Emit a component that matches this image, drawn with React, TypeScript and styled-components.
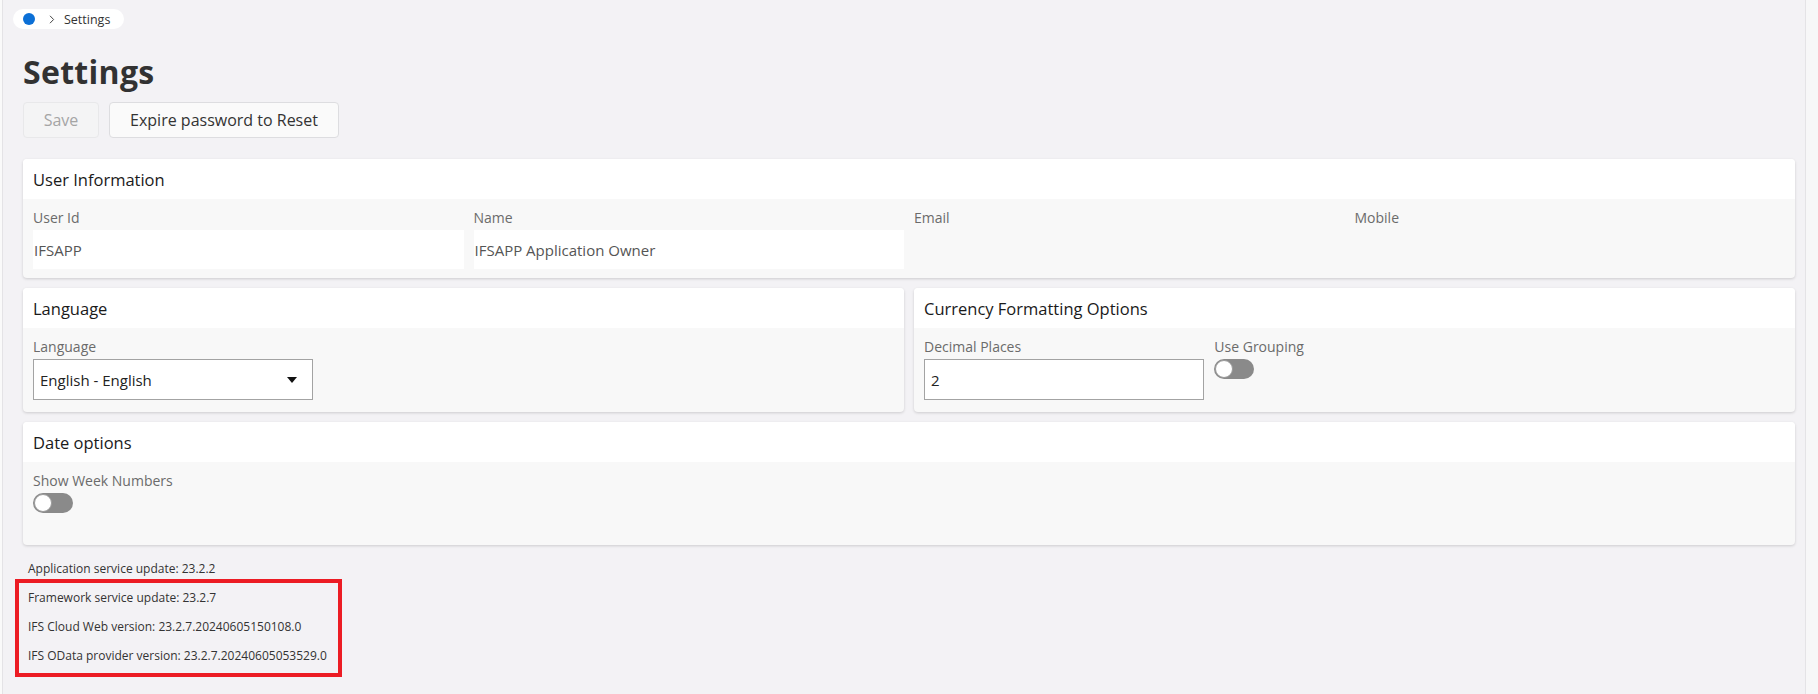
import React from "react";
import styled, { createGlobalStyle } from "styled-components";

const GlobalStyle = createGlobalStyle`
  html, body {
    margin: 0;
    padding: 0;
    height: 100%;
    overflow: hidden;
  }
  body {
    font-family: "Open Sans", "Noto Sans", Arial, sans-serif;
    background: #f3f2f5;
    color: #333;
  }
  * { box-sizing: border-box; }
`;

const Shell = styled.div`
  display: flex;
  width: 100vw;
  height: 100vh;
`;

const LeftRail = styled.div`
  width: 3px;
  background: #fafafa;
  border-right: 1px solid #e4e3e6;
`;

const ScrollTrack = styled.div`
  width: 13px;
  background: #f7f7f8;
  border-left: 1px solid #e4e3e6;
`;

const Main = styled.main`
  flex: 1;
  padding: 9px 10px 0 20px;
  display: flex;
  flex-direction: column;
  min-width: 0;
`;

const Breadcrumb = styled.nav`
  align-self: flex-start;
  margin-left: -10px;
  height: 20px;
  width: 111px;
  background: #fff;
  border-radius: 10px;
  display: flex;
  align-items: center;
  padding-left: 10px;
  font-size: 12.5px;
  color: #333;
`;

const HomeDot = styled.span`
  width: 12px;
  height: 12px;
  border-radius: 50%;
  background: #0b6fd6;
`;

const Crumb = styled.span`
  display: flex;
  align-items: center;
  gap: 9px;
  margin-left: 14px;
`;

const Title = styled.h1`
  margin: 22px 0 0;
  font-size: 32px;
  line-height: 42px;
  font-weight: 700;
  color: #323232;
  letter-spacing: 0.3px;
`;

const Toolbar = styled.div`
  display: flex;
  gap: 10px;
  margin-top: 9px;
`;

const Button = styled.button<{ $disabled?: boolean }>`
  height: 36px;
  padding: 0;
  font-family: inherit;
  font-size: 16px;
  border-radius: 4px;
  border: 1px solid ${(p) => (p.$disabled ? "#e8e8ea" : "#dddde0")};
  background: ${(p) => (p.$disabled ? "#f4f4f5" : "#fafafa")};
  color: ${(p) => (p.$disabled ? "#a5a5a5" : "#333")};
  width: ${(p) => (p.$disabled ? "76px" : "230px")};
`;

const Cards = styled.div`
  display: flex;
  flex-direction: column;
  gap: 10px;
  margin-top: 21px;
`;

const HalfRow = styled.div`
  display: grid;
  grid-template-columns: 1fr 1fr;
  gap: 10px;
`;

const Card = styled.section`
  background: #f8f8f8;
  border-radius: 4px;
  box-shadow: 0 1px 3px rgba(0, 0, 0, 0.16);
  overflow: hidden;
`;

const CardHeader = styled.header`
  height: 40px;
  background: #fff;
  display: flex;
  align-items: center;
  padding: 0 10px;
  font-size: 16.5px;
  color: #1a1a1a;
`;

const CardBody = styled.div<{ $cols: number; $bottom: number }>`
  display: grid;
  grid-template-columns: repeat(${(p) => p.$cols}, 1fr);
  column-gap: 10px;
  padding: 9px 10px ${(p) => p.$bottom}px;
`;

const Field = styled.div`
  display: flex;
  flex-direction: column;
  gap: 2px;
  min-width: 0;
`;

const Label = styled.label`
  font-size: 14px;
  line-height: 20px;
  color: #6b6b6b;
`;

const ReadOnly = styled.div`
  height: 39px;
  background: #fff;
  display: flex;
  align-items: center;
  padding-left: 1px;
  font-size: 15px;
  color: #555;
`;

const Input = styled.div`
  height: 41px;
  background: #fff;
  border: 1px solid #a3a3a3;
  display: flex;
  align-items: center;
  padding: 0 6px;
  font-size: 15px;
  color: #222;
`;

const SelectBox = styled(Input)`
  justify-content: space-between;
  padding-right: 15px;
`;

const Caret = styled.span`
  width: 0;
  height: 0;
  border-left: 5.5px solid transparent;
  border-right: 5.5px solid transparent;
  border-top: 6px solid #111;
`;

const Toggle = styled.span`
  width: 40px;
  height: 20px;
  border-radius: 10px;
  background: #8a8a8a;
  display: flex;
  align-items: center;
  padding-left: 1px;
  &::before {
    content: "";
    width: 18px;
    height: 18px;
    border-radius: 50%;
    background: #fff;
    box-sizing: border-box;
    border: 1px solid #9a9a9a;
  }
`;

const Footer = styled.footer`
  position: relative;
  margin-top: 9px;
  padding-left: 5px;
  display: flex;
  flex-direction: column;
`;

const FooterLine = styled.div`
  font-size: 12px;
  line-height: 29px;
  color: #333;
`;

const Highlight = styled.div`
  position: absolute;
  left: -8px;
  top: 25px;
  width: 327px;
  height: 98px;
  border: 4px solid #ec1c24;
  pointer-events: none;
`;

const userFields = [
  { label: "User Id", value: "IFSAPP" },
  { label: "Name", value: "IFSAPP Application Owner" },
  { label: "Email" },
  { label: "Mobile" },
];

const versions = [
  "Application service update: 23.2.2",
  "Framework service update: 23.2.7",
  "IFS Cloud Web version: 23.2.7.20240605150108.0",
  "IFS OData provider version: 23.2.7.20240605053529.0",
];

export default function App() {
  return (
    <>
      <GlobalStyle />
      <Shell>
        <LeftRail />
        <Main>
          <Breadcrumb>
            <HomeDot />
            <Crumb>
              <svg width="6" height="9" viewBox="0 0 6 9">
                <path d="M1 0.8 L4.6 4.5 L1 8.2" fill="none" stroke="#444" strokeWidth="1" />
              </svg>
              <span>Settings</span>
            </Crumb>
          </Breadcrumb>
          <Title>Settings</Title>
          <Toolbar>
            <Button $disabled>Save</Button>
            <Button>Expire password to Reset</Button>
          </Toolbar>
          <Cards>
            <Card>
              <CardHeader>User Information</CardHeader>
              <CardBody $cols={4} $bottom={9}>
                {userFields.map((f) => (
                  <Field key={f.label}>
                    <Label>{f.label}</Label>
                    {f.value ? <ReadOnly>{f.value}</ReadOnly> : null}
                  </Field>
                ))}
              </CardBody>
            </Card>
            <HalfRow>
              <Card>
                <CardHeader>Language</CardHeader>
                <CardBody $cols={3} $bottom={12}>
                  <Field>
                    <Label>Language</Label>
                    <SelectBox>
                      <span>English - English</span>
                      <Caret />
                    </SelectBox>
                  </Field>
                </CardBody>
              </Card>
              <Card>
                <CardHeader>Currency Formatting Options</CardHeader>
                <CardBody $cols={3} $bottom={12}>
                  <Field>
                    <Label>Decimal Places</Label>
                    <Input>2</Input>
                  </Field>
                  <Field>
                    <Label>Use Grouping</Label>
                    <Toggle />
                  </Field>
                </CardBody>
              </Card>
            </HalfRow>
            <Card>
              <CardHeader>Date options</CardHeader>
              <CardBody $cols={4} $bottom={32}>
                <Field>
                  <Label>Show Week Numbers</Label>
                  <Toggle />
                </Field>
              </CardBody>
            </Card>
          </Cards>
          <Footer>
            {versions.map((v) => (
              <FooterLine key={v}>{v}</FooterLine>
            ))}
            <Highlight />
          </Footer>
        </Main>
        <ScrollTrack />
      </Shell>
    </>
  );
}
